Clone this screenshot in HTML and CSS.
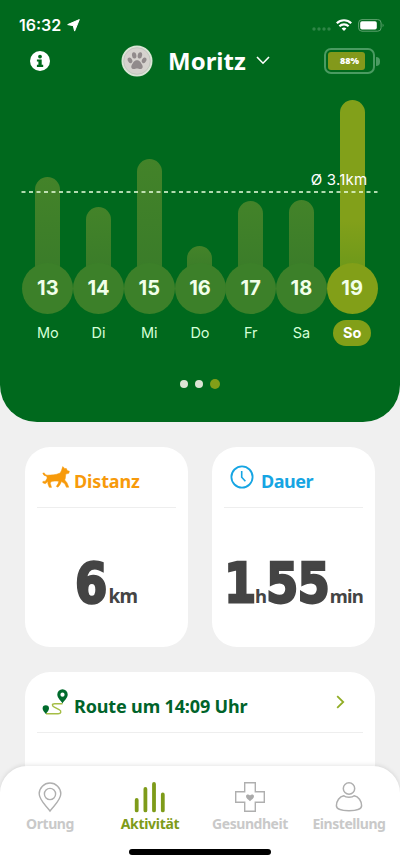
FILE: index.html
```html
<!DOCTYPE html>
<html lang="de">
<head>
<meta charset="utf-8">
<meta name="viewport" content="width=device-width, initial-scale=1">
<title>Aktivität</title>
<link rel="stylesheet" href="styles.css">
</head>
<body>
<main class="app">
  <section class="hero">
    <div class="status">
      <span class="time">16:32</span>
      <svg class="nav-arrow" width="13" height="13" viewBox="0 0 13 13"><path d="M12.300.6 7.600 12.100 6.300 6.700.7 5.600z" fill="#fff" stroke="#fff" stroke-linejoin="round"/></svg>
      <svg class="signal" width="19" height="4" viewBox="0 0 19 4" fill="#2f8647"><circle cx="2" cy="2" r="1.700"/><circle cx="7" cy="2" r="1.700"/><circle cx="12" cy="2" r="1.700"/><circle cx="17" cy="2" r="1.700"/></svg>
      <svg class="wifi" width="16" height="12" viewBox="0 0 16 12" fill="none" stroke="#fff" stroke-width="2.200"><path d="M.8 4.200a10.300 10.300 0 0 1 14.400 0"/><path d="M3.400 7.200a6.600 6.600 0 0 1 9.200 0"/><path d="M8 12 5.600 9.600a3.500 3.500 0 0 1 4.800 0z" fill="#fff" stroke="none"/></svg>
      <svg class="phone-battery" width="27" height="13" viewBox="0 0 27 13"><rect x=".6" y=".6" width="22.500" height="11.600" rx="3.400" fill="none" stroke="#5ea36f"/><rect x="2.200" y="2.200" width="16.600" height="8.400" rx="1.800" fill="#fff"/><path d="M24.600 4.600q2 1.800 0 3.700z" fill="#5ea36f"/></svg>
    </div>
    <header class="header">
      <svg class="info" width="20" height="20" viewBox="0 0 20 20"><circle cx="10" cy="10" r="10" fill="#fff"/><circle cx="10" cy="5.600" r="1.900" fill="#00691d"/><path d="M6.900 8.400h4.800v5.300h1.500v2.200H6.900v-2.200h1.500v-3.100H6.900z" fill="#00691d"/></svg>
      <svg class="avatar" width="32" height="32" viewBox="0 0 32 32"><circle cx="16" cy="16" r="15.500" fill="#d9e5d5"/><circle cx="16" cy="16" r="13.300" fill="#d6d2ce" stroke="#c3c6bf"/><g fill="#918a8b"><ellipse cx="9" cy="15.300" rx="2.100" ry="3" transform="rotate(-28 9 15.300)"/><ellipse cx="13.200" cy="10.400" rx="2.200" ry="3.200" transform="rotate(-8 13.200 10.400)"/><ellipse cx="18.900" cy="10.400" rx="2.200" ry="3.200" transform="rotate(10 18.900 10.400)"/><ellipse cx="23.100" cy="15.300" rx="2.100" ry="3" transform="rotate(28 23.100 15.300)"/><path d="M16 15.200c3 0 4 2.800 5 4.300 1.500 2.400.5 4.600-1.700 4.600-1.400 0-2-.6-3.300-.6s-1.900.6-3.300.6c-2.200 0-3.200-2.200-1.700-4.600 1-1.500 2-4.300 5-4.300z"/></g></svg>
      <h1 class="name">Moritz</h1>
      <svg class="chevron" width="14" height="9" viewBox="0 0 14 9" fill="none" stroke="#fff" stroke-width="1.600"><path d="M1 1l6 6.200L13 1"/></svg>
      <div class="collar"><div class="collar-case"><span class="collar-level">88%</span></div><i class="collar-tip"></i></div>
    </header>
    <div class="chart">
      <div class="day"><i class="bar" style="height:95px"></i><b class="num">13</b><span class="label">Mo</span></div>
      <div class="day"><i class="bar" style="height:65px"></i><b class="num">14</b><span class="label">Di</span></div>
      <div class="day"><i class="bar" style="height:113px"></i><b class="num">15</b><span class="label">Mi</span></div>
      <div class="day"><i class="bar" style="height:26px"></i><b class="num">16</b><span class="label">Do</span></div>
      <div class="day"><i class="bar" style="height:71px"></i><b class="num">17</b><span class="label">Fr</span></div>
      <div class="day"><i class="bar" style="height:72px"></i><b class="num">18</b><span class="label">Sa</span></div>
      <div class="day today"><i class="bar" style="height:172px"></i><b class="num">19</b><span class="label">So</span></div>
      <div class="average"><span class="average-text">Ø 3.1km</span><svg class="average-line" width="358" height="2" viewBox="0 0 358 2"><path d="M.5 1H356.500" stroke="#eaffdf" stroke-width="1.500" stroke-dasharray="4 3.500"/></svg></div>
    </div>
    <div class="pager"><i class="dot"></i><i class="dot"></i><i class="dot active"></i></div>
  </section>

  <section class="cards">
    <article class="card">
      <h2 class="card-head orange">
        <svg class="dog" width="28" height="23" viewBox="0 0 28 23"><path d="M5 9.200C9.500 9 14 9 17.500 7.200 19.700 6.200 19.600 3 20.800.6L22.600 2.400 24.400 2.600 25.200 4.600 27.400 5.200 26.800 7.300 23.800 8.100C23.400 11 23.600 12.400 22.700 14L25 16.800 26.800 21.200 24.400 21.300 22.800 17.800 19.500 15.600 17.800 18.900 16 21.200 14.300 20.400 16.100 17.600 16.800 15.200C14 15.200 11 14.800 8.900 15.800L8.300 17.300 9.500 21.400 7.200 21.300 5.800 17.500 6 15.500 3.200 17.700.8 16.800.9 15.400 3.400 15.200 5.200 12.100 4.600 10.200Q1.200 9.800.8 7.100L2.300 6.900Q2.800 8.800 5 9.200z" fill="currentColor" stroke="currentColor" stroke-width=".5" stroke-linejoin="round"/></svg>
        <span>Distanz</span>
      </h2>
      <p class="value"><span class="digits">6</span><span class="unit">km</span></p>
    </article>
    <article class="card">
      <h2 class="card-head blue">
        <svg class="clock" width="24" height="24" viewBox="0 0 24 24" fill="none" stroke="currentColor" stroke-width="1.800"><circle cx="12" cy="12" r="10.600"/><path d="M11.700 6v6.200l3.700 4" stroke-width="1.600"/></svg>
        <span>Dauer</span>
      </h2>
      <p class="value duration"><span class="digits">1</span><span class="unit">h</span><span class="digits two">55</span><span class="unit">min</span></p>
    </article>
    <article class="card route">
      <h2 class="card-head green">
        <svg class="route-icon" width="27" height="27" viewBox="0 0 27 27"><path d="M20.500 14.800H12.600c-3 0-2.700 2.200-.3 3.400l4.800 2.500c2.800 1.400 2 4-1 4H4" fill="none" stroke="#a5bd45" stroke-width="1.400"/><path d="M20.500 14.500c-1.700-3.100-5.200-5.400-5.200-9a5.200 5.200 0 0 1 10.400 0c0 3.600-3.500 5.900-5.200 9zM20.500 3.600a2.100 2.100 0 1 0 0 4.200 2.100 2.100 0 0 0 0-4.200z" fill="#006b2c" fill-rule="evenodd"/><path d="M3.800 25C2.800 23.100.6 21.700.6 19.400a3.200 3.200 0 0 1 6.400 0c0 2.300-2.200 3.700-3.200 5.600z" fill="#006b2c"/></svg>
        <span>Route um 14:09 Uhr</span>
        <svg class="more" width="9" height="14" viewBox="0 0 9 14" fill="none" stroke="#91ad25" stroke-width="1.800"><path d="M1.200 1.200 7.200 7l-6 5.800"/></svg>
      </h2>
    </article>
  </section>

  <nav class="tabs">
    <a class="tab"><svg width="32" height="32" viewBox="0 0 32 32" fill="none" stroke="#afafaf" stroke-width="1.400"><path d="M16 30C12 24.500 5.200 19.200 5.200 12.800a10.800 10.800 0 0 1 21.600 0C26.800 19.200 20 24.500 16 30z"/><circle cx="16" cy="13" r="5.600"/></svg><span>Ortung</span></a>
    <a class="tab selected"><svg width="32" height="32" viewBox="0 0 32 32" fill="none" stroke="#7e9b19" stroke-width="3.800" stroke-linecap="round"><path d="M2.700 19v10.400M11.400 8v21.400M20 3v26.400M28.800 13.500v15.900"/></svg><span>Aktivität</span></a>
    <a class="tab"><svg width="32" height="32" viewBox="0 0 32 32" fill="none" stroke="#afafaf" stroke-width="1.400"><path d="M10.700 1.700h10.600v9h9v10.600h-9v9H10.700v-9h-9V10.700h9z"/><path d="M16 20.200c-1.500-1.500-4-2.900-4-4.900 0-2.200 2.900-2.500 4-.7 1.100-1.800 4-1.500 4 .7 0 2-2.500 3.400-4 4.900z" fill="#aaa" stroke="none"/></svg><span>Gesundheit</span></a>
    <a class="tab last"><svg width="32" height="32" viewBox="0 0 32 32" fill="none" stroke="#afafaf" stroke-width="1.500"><circle cx="16" cy="7.500" r="5.700"/><path d="M10.800 14.800C6.500 15.500 3.400 20 3.400 24.800c0 3.800 6.100 4.900 12.600 4.900s12.600-1.100 12.600-4.900c0-4.800-3.100-9.300-7.400-10-2.100 2-8.300 2-10.400 0z"/></svg><span>Einstellung</span></a>
    <i class="home"></i>
  </nav>
</main>
</body>
</html>
```
FILE: styles.css
```css
* { box-sizing: border-box; }
body { margin: 0; background: #f0f0f0; font-family: "Noto Sans", sans-serif; }
h1, h2, p { margin: 0; }
svg { display: block; flex: none; }
.app { width: 400px; height: 866px; display: flex; flex-direction: column; overflow: hidden; background: #f0f0f0; position: relative; }

.hero { height: 422px; flex: none; background: #00691d; border-radius: 0 0 37px 37px; color: #fff; font-family: Inter, sans-serif; }
.status { height: 40px; padding: 10px 15px 0 19px; display: flex; align-items: center; }
.time { font-size: 16px; font-weight: 600; line-height: 20px; width: 43px; white-space: nowrap; }
.nav-arrow { margin-left: 5px; }
.signal { margin-left: auto; margin-top: 7px; }
.wifi { margin: 0 6px 0 5px; }
.header { height: 42px; padding: 0 20px 0 30px; display: flex; align-items: center; }
.avatar { margin-left: 71px; }
.name { font: 700 24px/34px "Noto Sans", sans-serif; margin-left: 15px; width: 78px; white-space: nowrap; }
.chevron { margin: -2px 0 0 10px; }
.collar { margin-left: auto; display: flex; align-items: center; gap: 1px; }
.collar-case { width: 51px; height: 26px; border: 2px solid #4a9b61; border-radius: 7px; padding: 2px; }
.collar-level { display: block; width: 37px; height: 18px; border-radius: 3px; background: #83991b; font: 800 9px/17px "Open Sans", sans-serif; text-align: right; padding-right: 6px; }
.collar-tip { width: 4px; height: 9px; border-radius: 0 5px 5px 0; background: #4a9b61; }

.chart { height: 266px; margin: 0 22.5px; display: grid; grid-template-columns: repeat(7, minmax(0, 1fr)); align-items: end; position: relative; }
.day { display: flex; flex-direction: column; align-items: center; }
.bar { width: 25px; border-radius: 13px 13px 0 0; background: linear-gradient(#438329, #3a7c29); margin-bottom: -9px; }
.num { width: 51px; height: 51px; border-radius: 50%; background: #3c8029; font-size: 20px; font-weight: 700; line-height: 51px; text-align: center; z-index: 1; color: #f1ffe9; }
.label { margin-top: 6px; height: 26px; padding: 0 10px; border-radius: 13px; font-size: 14.5px; line-height: 26px; color: #d5ffd8; margin-bottom: 2px; }
.today .bar { background: linear-gradient(#82a01a 70%, #6c981a); }
.today .num { background: #829f18; }
.today .label { background: #829f18; color: #fff; font-weight: 700; }
.average { position: absolute; left: -2px; top: 89px; width: 358px; z-index: 2; }
.average-text { display: block; font-size: 15px; letter-spacing: .25px; line-height: 18px; text-align: right; padding-right: 11px; margin-bottom: 2px; }
.pager { display: flex; align-items: center; justify-content: center; gap: 7px; height: 10px; margin-top: 31px; }
.dot { width: 8px; height: 8px; border-radius: 50%; background: #dce4d4; }
.dot.active { width: 10px; height: 10px; background: #829f18; }

.cards { margin: 25px 25px 0; display: grid; grid-template-columns: 163px 163px; grid-template-rows: 200px 200px; gap: 25px 24px; }
.card { background: #fff; border-radius: 25px; padding: 0 12px; }
.card-head { height: 61px; border-bottom: 1px solid #eee; display: flex; align-items: flex-start; padding-top: 20px; font-size: 18px; letter-spacing: -.15px; line-height: 28px; white-space: nowrap; }
.orange { color: #f79a0b; }
.blue { color: #16a5e3; }
.green { color: #00632a; }
.dog { margin: -1px 4px 0 5px; }
.clock { margin: -2px 7px 0 6px; }
.blue span { letter-spacing: -.5px; }
.value { display: flex; justify-content: center; align-items: baseline; color: #444; padding-top: 37px; line-height: 76px; font-size: 19px; letter-spacing: -.6px; font-weight: 700; white-space: nowrap; }
.digits { font: 700 56px/76px "DejaVu Sans", sans-serif; width: 33px; transform: scaleX(.83); transform-origin: 0 50%; letter-spacing: 0; -webkit-text-stroke: 2.6px #444; }
.duration { font-size: 18.5px; letter-spacing: -.8px; }
.duration .digits { width: 31px; }
.duration .two { width: 63.5px; letter-spacing: -1px; }
.unit { position: relative; top: 1px; }
.route { grid-column: 1 / 3; }
.route-icon { margin: -3px 5px 0 5px; }
.more { margin: 3px 18px 0 auto; }

.tabs { position: absolute; left: 0; right: 0; bottom: 0; height: 100px; background: #fff; border-radius: 27px 27px 0 0; box-shadow: 0 -1px 4px rgba(0,0,0,.1); display: grid; grid-template-columns: repeat(4, 100px); grid-template-rows: 83px 6px; }
.tab { display: flex; flex-direction: column; align-items: center; padding-top: 15px; font-size: 14px; letter-spacing: -.45px; line-height: 20px; font-weight: 700; color: #c9c9c9; }
.tab span { margin-top: 1px; }
.last { padding-right: 2px; }
.selected { color: #7e9b19; letter-spacing: -.3px; }
.home { grid-column: 1 / 5; justify-self: center; width: 142px; height: 6px; border-radius: 3px; background: #000; }
```
